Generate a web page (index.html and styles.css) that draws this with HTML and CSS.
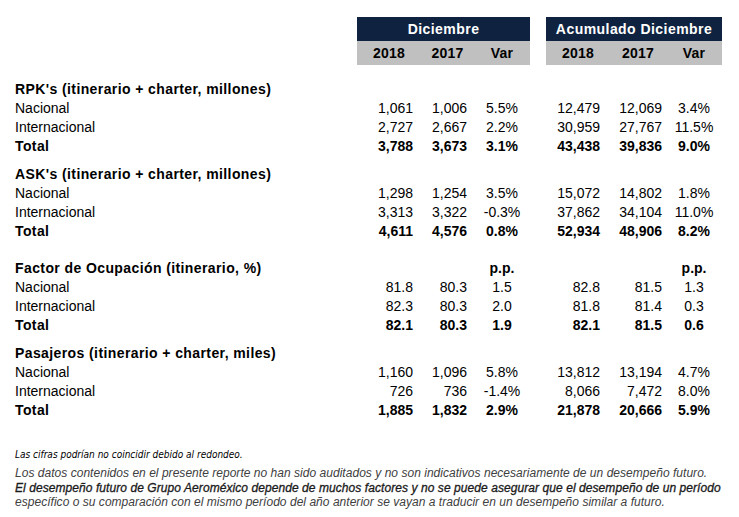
FILE: index.html
```html
<!DOCTYPE html>
<html lang="es">
<head>
<meta charset="utf-8">
<title>Tráfico Diciembre</title>
<link rel="stylesheet" href="styles.css">
</head>
<body>
<div class="page">
  <table class="stats">
    <colgroup>
      <col class="c-label"><col class="c-a"><col class="c-b"><col class="c-v">
      <col class="c-gap">
      <col class="c-a2"><col class="c-b2"><col class="c-v">
    </colgroup>
    <thead>
      <tr class="band-row">
        <td></td>
        <th colspan="3" class="band">Diciembre</th>
        <td></td>
        <th colspan="3" class="band">Acumulado Diciembre</th>
      </tr>
      <tr class="year-row">
        <td></td>
        <th class="yr">2018</th><th class="yr">2017</th><th class="yr">Var</th>
        <td></td>
        <th class="yr">2018</th><th class="yr">2017</th><th class="yr">Var</th>
      </tr>
    </thead>
    <tbody>
      <tr class="sp-top"><td colspan="8"></td></tr>

      <tr class="head"><td class="label">RPK's (itinerario + charter, millones)</td><td colspan="7"></td></tr>
      <tr><td class="label">Nacional</td><td class="n a">1,061</td><td class="n b">1,006</td><td class="v">5.5%</td><td></td><td class="n a2">12,479</td><td class="n b2">12,069</td><td class="v">3.4%</td></tr>
      <tr><td class="label">Internacional</td><td class="n a">2,727</td><td class="n b">2,667</td><td class="v">2.2%</td><td></td><td class="n a2">30,959</td><td class="n b2">27,767</td><td class="v">11.5%</td></tr>
      <tr class="total"><td class="label">Total</td><td class="n a">3,788</td><td class="n b">3,673</td><td class="v">3.1%</td><td></td><td class="n a2">43,438</td><td class="n b2">39,836</td><td class="v">9.0%</td></tr>

      <tr class="sp"><td colspan="8"></td></tr>

      <tr class="head"><td class="label">ASK's (itinerario + charter, millones)</td><td colspan="7"></td></tr>
      <tr><td class="label">Nacional</td><td class="n a">1,298</td><td class="n b">1,254</td><td class="v">3.5%</td><td></td><td class="n a2">15,072</td><td class="n b2">14,802</td><td class="v">1.8%</td></tr>
      <tr><td class="label">Internacional</td><td class="n a">3,313</td><td class="n b">3,322</td><td class="v">-0.3%</td><td></td><td class="n a2">37,862</td><td class="n b2">34,104</td><td class="v">11.0%</td></tr>
      <tr class="total"><td class="label">Total</td><td class="n a">4,611</td><td class="n b">4,576</td><td class="v">0.8%</td><td></td><td class="n a2">52,934</td><td class="n b2">48,906</td><td class="v">8.2%</td></tr>

      <tr class="sp-wide"><td colspan="8"></td></tr>

      <tr class="head"><td class="label">Factor de Ocupación (itinerario, %)</td><td></td><td></td><td class="v">p.p.</td><td></td><td></td><td></td><td class="v">p.p.</td></tr>
      <tr><td class="label">Nacional</td><td class="n a">81.8</td><td class="n b">80.3</td><td class="v">1.5</td><td></td><td class="n a2">82.8</td><td class="n b2">81.5</td><td class="v">1.3</td></tr>
      <tr><td class="label">Internacional</td><td class="n a">82.3</td><td class="n b">80.3</td><td class="v">2.0</td><td></td><td class="n a2">81.8</td><td class="n b2">81.4</td><td class="v">0.3</td></tr>
      <tr class="total"><td class="label">Total</td><td class="n a">82.1</td><td class="n b">80.3</td><td class="v">1.9</td><td></td><td class="n a2">82.1</td><td class="n b2">81.5</td><td class="v">0.6</td></tr>

      <tr class="sp"><td colspan="8"></td></tr>

      <tr class="head"><td class="label">Pasajeros (itinerario + charter, miles)</td><td colspan="7"></td></tr>
      <tr><td class="label">Nacional</td><td class="n a">1,160</td><td class="n b">1,096</td><td class="v">5.8%</td><td></td><td class="n a2">13,812</td><td class="n b2">13,194</td><td class="v">4.7%</td></tr>
      <tr><td class="label">Internacional</td><td class="n a">726</td><td class="n b">736</td><td class="v">-1.4%</td><td></td><td class="n a2">8,066</td><td class="n b2">7,472</td><td class="v">8.0%</td></tr>
      <tr class="total"><td class="label">Total</td><td class="n a">1,885</td><td class="n b">1,832</td><td class="v">2.9%</td><td></td><td class="n a2">21,878</td><td class="n b2">20,666</td><td class="v">5.9%</td></tr>
    </tbody>
  </table>

  <div class="notes">
    <p class="round">Las cifras podrían no coincidir debido al redondeo.</p>
    <p class="disclaimer">Los datos contenidos en el presente reporte no han sido auditados y no son indicativos necesariamente de un desempeño futuro.<br><span class="strong">El desempeño futuro de Grupo Aeroméxico depende de muchos factores y no se puede asegurar que el desempeño de un período</span><br>específico o su comparación con el mismo período del año anterior se vayan a traducir en un desempeño similar a futuro.</p>
  </div>
</div>
</body>
</html>
```

FILE: styles.css
```css
html, body {
  margin: 0;
  padding: 0;
  background: #ffffff;
}

body {
  font-family: "Liberation Sans", Arial, sans-serif;
  font-size: 14px;
  color: #000000;
}

.page {
  padding-top: 17px;
}

.stats {
  border-collapse: collapse;
  table-layout: fixed;
  width: 722px;
}

.stats td,
.stats th {
  padding: 0;
  white-space: nowrap;
  line-height: 19px;
}

.c-label { width: 357px; }
.c-a { width: 64px; }
.c-b { width: 53px; }
.c-v { width: 56px; }
.c-gap { width: 16px; }
.c-a2 { width: 64px; }
.c-b2 { width: 56px; }

.band-row th,
.band-row td,
.year-row th,
.year-row td {
  height: 24px;
  line-height: 24px;
}

.band {
  background: #0f2341;
  color: #ffffff;
  font-weight: bold;
  text-align: center;
  letter-spacing: 0.45px;
}

.yr {
  background: #c0c0c0;
  font-weight: bold;
  text-align: center;
  letter-spacing: 0.2px;
}

.stats tbody td { height: 19px; }

.stats tr.sp-top td { height: 15px; line-height: 15px; }
.stats tr.sp td { height: 9px; line-height: 9px; }
.stats tr.sp-wide td { height: 18px; line-height: 18px; }

.label {
  padding-left: 15px !important;
  overflow: visible;
}

.head td { font-weight: bold; }
.total td { font-weight: bold; }
.head td.label,
.total td.label { letter-spacing: 0.4px; }

.n { text-align: right; }
.stats td.a { padding-right: 8px; }
.stats td.b { padding-right: 7px; }
.stats td.a2 { padding-right: 10px; }
.stats td.b2 { padding-right: 4px; }
.v { text-align: center; }

.notes {
  padding-left: 15px;
  margin-top: 28px;
}

.round {
  margin: 0;
  font-family: "Liberation Sans Narrow", "DejaVu Sans Condensed", "Liberation Sans", sans-serif;
  font-style: italic;
  font-size: 10px;
  line-height: 14px;
  color: #000000;
}

.disclaimer {
  margin: 4px 0 0 0;
  font-style: italic;
  font-size: 12px;
  line-height: 14.5px;
  color: #404040;
  white-space: nowrap;
  letter-spacing: 0.03px;
}

.disclaimer .strong {
  color: #1a1a1a;
  letter-spacing: 0.07px;
  -webkit-text-stroke: 0.3px #1a1a1a;
}
```
